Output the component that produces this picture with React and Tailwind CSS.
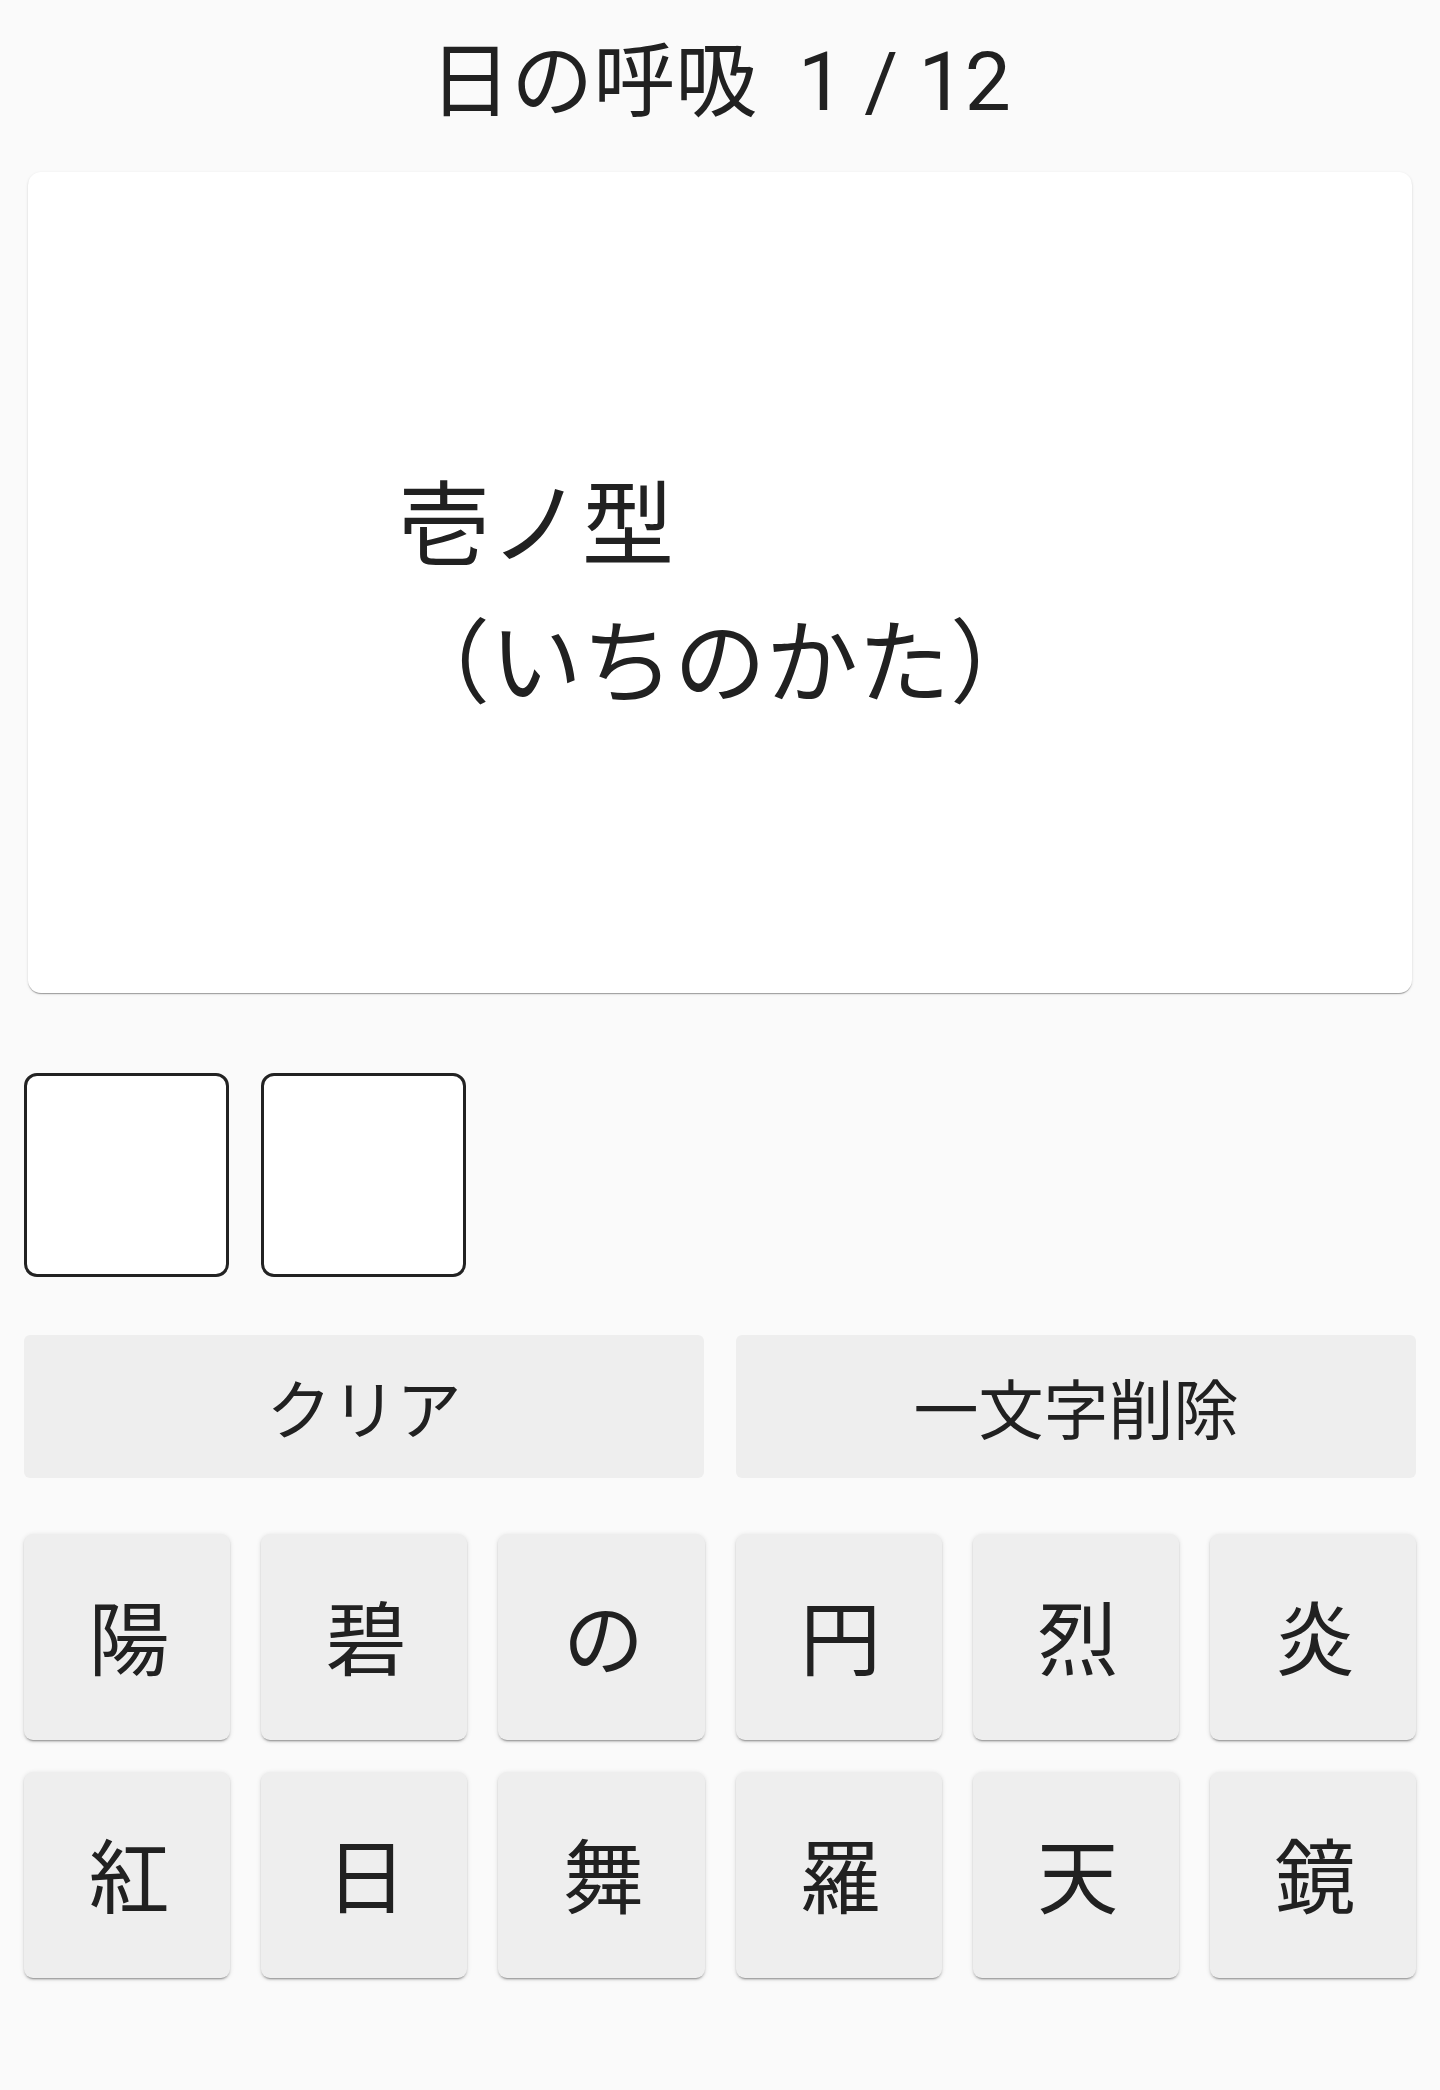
const KEYS = ['陽', '碧', 'の', '円', '烈', '炎', '紅', '日', '舞', '羅', '天', '鏡'];

function KeyTile({ char }) {
  return (
    <button className="flex aspect-square items-center justify-center rounded-[9px] bg-[#eeeeee] pt-2 pl-1 text-[81px] leading-none text-[#212121] shadow-[0_3px_1px_-2px_rgba(0,0,0,0.2),0_2px_2px_0_rgba(0,0,0,0.14),0_1px_5px_0_rgba(0,0,0,0.12)]">
      {char}
    </button>
  );
}

export default function App() {
  return (
    <div className="min-h-[2090px] bg-[#fafafa] font-['Roboto','Noto_Sans_CJK_JP',sans-serif] text-[#212121]">
      <header className="flex h-[172px] items-start justify-center pt-[34px]">
        <h1 className="whitespace-pre text-[82px] font-normal leading-[96px]">日の呼吸  1 / 12</h1>
      </header>

      <main className="flex flex-col px-6">
        <section className="mx-1 flex h-[821px] items-center justify-center rounded-[13px] bg-white shadow-[0_2px_1px_-1px_rgba(0,0,0,0.2),0_1px_1px_0_rgba(0,0,0,0.14),0_1px_3px_0_rgba(0,0,0,0.12)]">
          <p className="mt-[26px] text-left text-[92px] leading-[138px]">
            壱ノ型
            <br />
            （いちのかた）
          </p>
        </section>

        <div className="mt-[80px] flex gap-8">
          <div className="h-[204px] w-[205px] rounded-[13px] border-[3px] border-[#222222] bg-white" />
          <div className="h-[204px] w-[205px] rounded-[13px] border-[3px] border-[#222222] bg-white" />
        </div>

        <div className="mt-[58px] grid grid-cols-2 gap-8">
          <button className="flex h-[143px] items-center justify-center rounded-[6px] bg-[#eeeeee] pt-3 text-[65px] leading-none">
            クリア
          </button>
          <button className="flex h-[143px] items-center justify-center rounded-[6px] bg-[#eeeeee] pt-3 text-[65px] leading-none">
            一文字削除
          </button>
        </div>

        <div className="mt-[56px] grid grid-cols-6 gap-x-[31px] gap-y-8">
          {KEYS.map((k) => (
            <KeyTile key={k} char={k} />
          ))}
        </div>
      </main>
    </div>
  );
}
